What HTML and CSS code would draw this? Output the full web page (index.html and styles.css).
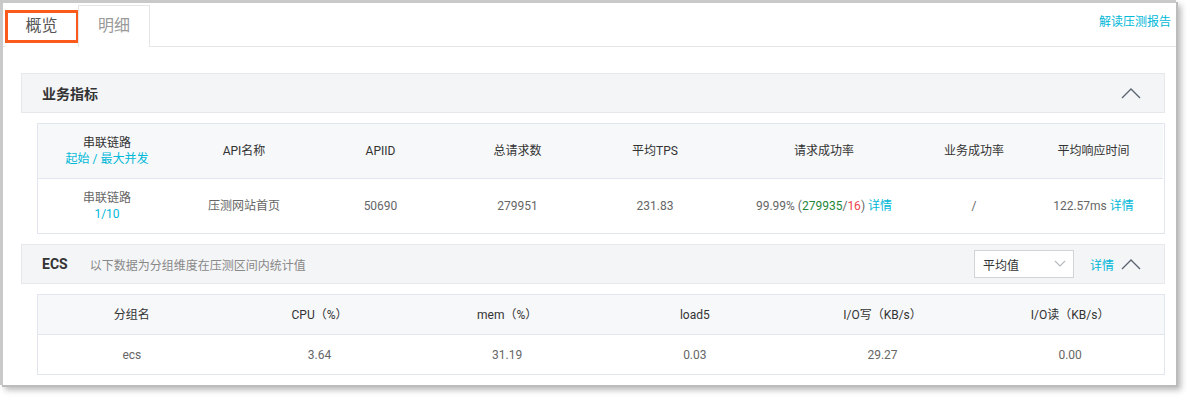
FILE: index.html
```html
<!DOCTYPE html>
<html lang="zh-CN">
<head>
<meta charset="utf-8">
<title>压测报告</title>
<link rel="stylesheet" href="styles.css">
</head>
<body>
<div class="frame">
  <div class="panel">
    <div class="tabbar">
      <div class="tabs">
        <div class="tab active">概览<span class="mark"></span></div>
        <div class="tab">明细</div>
      </div>
      <a class="report-link">解读压测报告</a>
    </div>
    <div class="content">
      <div class="sec-head">
        <span class="sec-title">业务指标</span>
        <svg class="chev" width="20" height="12" viewBox="0 0 20 12"><path d="M1 11 L10 2 L19 11" fill="none" stroke="#5b6470" stroke-width="1.4"/></svg>
      </div>
      <div class="tbl biz">
        <div class="th"><div>串联链路<br><span class="blue">起始 / 最大并发</span></div></div>
        <div class="th">API名称</div>
        <div class="th">APIID</div>
        <div class="th">总请求数</div>
        <div class="th">平均TPS</div>
        <div class="th">请求成功率</div>
        <div class="th">业务成功率</div>
        <div class="th">平均响应时间</div>
        <div class="td"><div>串联链路<br><span class="blue">1/10</span></div></div>
        <div class="td">压测网站首页</div>
        <div class="td">50690</div>
        <div class="td">279951</div>
        <div class="td">231.83</div>
        <div class="td"><span>99.99% (<span class="green">279935</span>/<span class="red">16</span>) <span class="blue">详情</span></span></div>
        <div class="td">/</div>
        <div class="td"><span>122.57ms <span class="blue">详情</span></span></div>
      </div>
      <div class="sec-head">
        <span class="sec-title ecs">ECS</span>
        <span class="sec-desc">以下数据为分组维度在压测区间内统计值</span>
        <div class="sec-tools">
          <div class="select"><span>平均值</span><svg width="12" height="8" viewBox="0 0 12 8"><path d="M1 1 L6 6 L11 1" fill="none" stroke="#b5b9bf" stroke-width="1.1"/></svg></div>
          <span class="blue detail">详情</span>
          <svg class="chev2" width="20" height="12" viewBox="0 0 20 12"><path d="M1 11 L10 2 L19 11" fill="none" stroke="#5b6470" stroke-width="1.4"/></svg>
        </div>
      </div>
      <div class="tbl ecs-tbl">
        <div class="th">分组名</div>
        <div class="th">CPU（%）</div>
        <div class="th">mem（%）</div>
        <div class="th">load5</div>
        <div class="th">I/O写（KB/s）</div>
        <div class="th">I/O读（KB/s）</div>
        <div class="td">ecs</div>
        <div class="td">3.64</div>
        <div class="td">31.19</div>
        <div class="td">0.03</div>
        <div class="td">29.27</div>
        <div class="td">0.00</div>
      </div>
    </div>
  </div>
</div>
</body>
</html>
```
FILE: styles.css
```css
* { box-sizing: border-box; }
html, body { margin: 0; padding: 0; background: #ffffff; }
body {
  font-family: Roboto, "Noto Sans CJK SC", sans-serif;
  font-size: 12px;
  color: #333;
  width: 1187px;
  height: 397px;
  overflow: hidden;
}
.frame {
  width: 1176px;
  height: 385px;
  background: #c9c9c9;
  padding: 3px 0 0 3px;
  box-shadow: 2px 2px 0 #bcbcbc, 5px 5px 6px rgba(0,0,0,0.28);
}
.panel {
  width: 1173px;
  height: 382px;
  background: #fff;
}
.tabbar {
  height: 44px;
  border-bottom: 1px solid #e6e6e6;
  display: flex;
  justify-content: space-between;
  align-items: flex-start;
  padding: 2px 5px 0 2px;
}
.tabs { display: flex; height: 42px; }
.tab {
  position: relative;
  width: 73px;
  height: 42px;
  font-size: 16px;
  line-height: 40px;
  text-align: center;
  color: #999;
  border: 1px solid #e6e6e6;
  border-bottom: none;
  background: #fff;
}
.tab.active {
  color: #555;
  border-color: transparent;
  height: 43px;
}
.tab + .tab { width: 72px; }
.mark {
  position: absolute;
  left: -1px;
  top: 4px;
  width: 74px;
  height: 33px;
  border: 3px solid #fa5a1c;
}
.report-link {
  color: #00b8d8;
  font-size: 12px;
  line-height: 16px;
  margin-top: 9px;
}
.content { padding: 26px 11px 0 18px; }
.sec-head {
  height: 40px;
  background: #f4f5f7;
  border: 1px solid #e6e8eb;
  display: flex;
  align-items: center;
  padding: 0 23px 0 20px;
}
.sec-title { font-size: 14px; font-weight: bold; color: #333; }
.sec-title.ecs { margin-right: 22px; }
.sec-desc { color: #888; font-size: 12px; }
.chev { margin-left: auto; }
.sec-tools { margin-left: auto; display: flex; align-items: center; }
.select {
  width: 100px;
  height: 28px;
  border: 1px solid #d2d4d8;
  background: #fff;
  display: flex;
  align-items: center;
  justify-content: space-between;
  padding: 0 7px 0 8px;
  font-size: 12px;
  color: #333;
}
.detail { margin-left: 16px; margin-right: 7px; }
.tbl {
  margin: 10px 0 10px 16px;
  border: 1px solid #e0e5ee;
  display: grid;
}
.biz { grid-template-columns: 138px 136px 137px 137px 138px 200px 100px 139px; grid-template-rows: 55px 54px; }
.ecs-tbl { grid-template-columns: repeat(6, 1fr); grid-template-rows: 40px 39px; }
.th, .td {
  display: flex;
  align-items: center;
  justify-content: center;
  text-align: center;
  line-height: 16px;
}
.th { background: #f7f8fa; color: #333; border-bottom: 1px solid #e0e5ee; }
.td { color: #666; }
.blue { color: #00b8d8; }
.green { color: #23873a; }
.red { color: #f0414f; }
```
